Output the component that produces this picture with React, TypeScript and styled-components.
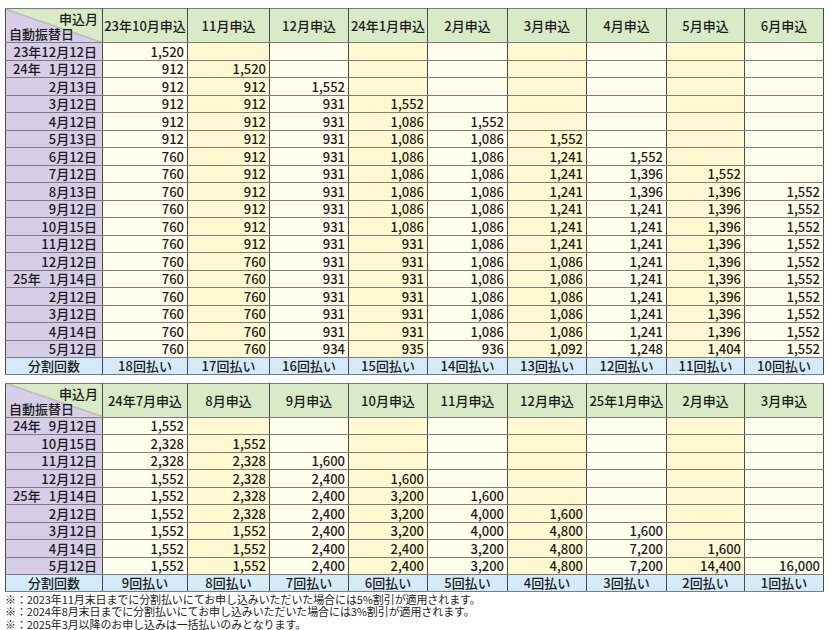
import { createGlobalStyle } from "styled-components";
import styled from "styled-components";

type Row = { date: string; values: number[] };

type Plan = {
  months: string[];
  rows: Row[];
  counts: string[];
};

const GlobalStyle = createGlobalStyle`
  body {
    margin: 0;
    background: #ffffff;
    font-family: "Noto Sans CJK JP", "Noto Sans", sans-serif;
    color: #1c1c1c;
  }
`;

const Page = styled.div`
  padding: 8px 0 0 5px;
  display: flex;
  flex-direction: column;
  gap: 8px;
`;

const Table = styled.table`
  border-collapse: collapse;
  table-layout: fixed;
  width: 818px;
  font-size: 13px;
  font-weight: 500;
  line-height: 1;
  border: 1px solid #4a4a4a;
  td,
  th {
    border-style: solid;
    border-width: 1px;
    border-color: #7c7c7c #4a4a4a;
    padding: 0;
    overflow: hidden;
    white-space: nowrap;
  }
`;

const HeadRow = styled.tr`
  height: 34px;
`;

const BodyRow = styled.tr`
  height: 17.5px;
`;

const CountRow = styled.tr`
  height: 16.5px;
`;

const Corner = styled.th`
  position: relative;
  font-weight: 500;
  background: linear-gradient(
    to top right,
    #d6cde8 calc(50% - 0.6px),
    #8a8a8a 50%,
    #d9ebc6 calc(50% + 0.6px)
  );
`;

const CornerTop = styled.span`
  position: absolute;
  top: 3px;
  right: 4px;
  line-height: 13px;
`;

const CornerBottom = styled.span`
  position: absolute;
  left: 3px;
  bottom: 2px;
  line-height: 13px;
`;

const MonthCell = styled.th`
  background: #d9ebc6;
  font-weight: 500;
  text-align: center;
`;

const DateCell = styled.td`
  background: #d6cde8;
  text-align: right;
  padding-right: 5px !important;
`;

const DateInner = styled.span`
  display: flex;
  justify-content: flex-end;
  gap: 8px;
`;

const NumCell = styled.td<{ $alt: boolean }>`
  background: ${(p) => (p.$alt ? "#fff8d0" : "#fffdec")};
  text-align: right;
  padding-right: 3px !important;
`;

const CountLabel = styled.td`
  background: #d3ebf8;
  text-align: center;
`;

const CountCell = styled.td`
  background: #d3ebf8;
  text-align: center;
`;

const Notes = styled.div`
  margin-top: -7px;
  font-size: 11px;
  line-height: 12.5px;
  letter-spacing: -0.1px;
  color: #222;
`;

const widths = [97, 85, 82, 79, 79, 80, 79, 80, 78, 79];

const plan1: Plan = {
  months: [
    "23年10月申込",
    "11月申込",
    "12月申込",
    "24年1月申込",
    "2月申込",
    "3月申込",
    "4月申込",
    "5月申込",
    "6月申込",
  ],
  rows: [
    { date: "23年12月12日", values: [1520] },
    { date: "24年|1月12日", values: [912, 1520] },
    { date: "2月13日", values: [912, 912, 1552] },
    { date: "3月12日", values: [912, 912, 931, 1552] },
    { date: "4月12日", values: [912, 912, 931, 1086, 1552] },
    { date: "5月13日", values: [912, 912, 931, 1086, 1086, 1552] },
    { date: "6月12日", values: [760, 912, 931, 1086, 1086, 1241, 1552] },
    { date: "7月12日", values: [760, 912, 931, 1086, 1086, 1241, 1396, 1552] },
    { date: "8月13日", values: [760, 912, 931, 1086, 1086, 1241, 1396, 1396, 1552] },
    { date: "9月12日", values: [760, 912, 931, 1086, 1086, 1241, 1241, 1396, 1552] },
    { date: "10月15日", values: [760, 912, 931, 1086, 1086, 1241, 1241, 1396, 1552] },
    { date: "11月12日", values: [760, 912, 931, 931, 1086, 1241, 1241, 1396, 1552] },
    { date: "12月12日", values: [760, 760, 931, 931, 1086, 1086, 1241, 1396, 1552] },
    { date: "25年|1月14日", values: [760, 760, 931, 931, 1086, 1086, 1241, 1396, 1552] },
    { date: "2月12日", values: [760, 760, 931, 931, 1086, 1086, 1241, 1396, 1552] },
    { date: "3月12日", values: [760, 760, 931, 931, 1086, 1086, 1241, 1396, 1552] },
    { date: "4月14日", values: [760, 760, 931, 931, 1086, 1086, 1241, 1396, 1552] },
    { date: "5月12日", values: [760, 760, 934, 935, 936, 1092, 1248, 1404, 1552] },
  ],
  counts: [18, 17, 16, 15, 14, 13, 12, 11, 10].map((n) => `${n}回払い`),
};

const plan2: Plan = {
  months: [
    "24年7月申込",
    "8月申込",
    "9月申込",
    "10月申込",
    "11月申込",
    "12月申込",
    "25年1月申込",
    "2月申込",
    "3月申込",
  ],
  rows: [
    { date: "24年|9月12日", values: [1552] },
    { date: "10月15日", values: [2328, 1552] },
    { date: "11月12日", values: [2328, 2328, 1600] },
    { date: "12月12日", values: [1552, 2328, 2400, 1600] },
    { date: "25年|1月14日", values: [1552, 2328, 2400, 3200, 1600] },
    { date: "2月12日", values: [1552, 2328, 2400, 3200, 4000, 1600] },
    { date: "3月12日", values: [1552, 1552, 2400, 3200, 4000, 4800, 1600] },
    { date: "4月14日", values: [1552, 1552, 2400, 2400, 3200, 4800, 7200, 1600] },
    { date: "5月12日", values: [1552, 1552, 2400, 2400, 3200, 4800, 7200, 14400, 16000] },
  ],
  counts: [9, 8, 7, 6, 5, 4, 3, 2, 1].map((n) => `${n}回払い`),
};

function DateLabel({ date }: { date: string }) {
  if (!date.includes("|")) return <>{date}</>;
  const [year, day] = date.split("|");
  return (
    <DateInner>
      <span>{year}</span>
      <span>{day}</span>
    </DateInner>
  );
}

function PlanTable({ plan }: { plan: Plan }) {
  return (
    <Table>
      <colgroup>
        {widths.map((w, i) => (
          <col key={i} style={{ width: w }} />
        ))}
      </colgroup>
      <thead>
        <HeadRow>
          <Corner>
            <CornerTop>申込月</CornerTop>
            <CornerBottom>自動振替日</CornerBottom>
          </Corner>
          {plan.months.map((m) => (
            <MonthCell key={m}>{m}</MonthCell>
          ))}
        </HeadRow>
      </thead>
      <tbody>
        {plan.rows.map((r, ri) => (
          <BodyRow key={ri}>
            <DateCell>
              <DateLabel date={r.date} />
            </DateCell>
            {plan.months.map((_, ci) => (
              <NumCell key={ci} $alt={ci % 2 === 1}>
                {r.values[ci] !== undefined ? r.values[ci].toLocaleString("en-US") : ""}
              </NumCell>
            ))}
          </BodyRow>
        ))}
        <CountRow>
          <CountLabel>分割回数</CountLabel>
          {plan.counts.map((c) => (
            <CountCell key={c}>{c}</CountCell>
          ))}
        </CountRow>
      </tbody>
    </Table>
  );
}

export default function App() {
  return (
    <>
      <GlobalStyle />
      <Page>
        <PlanTable plan={plan1} />
        <PlanTable plan={plan2} />
        <Notes>
          <div>※：2023年11月末日までに分割払いにてお申し込みいただいた場合には5%割引が適用されます。</div>
          <div>※：2024年8月末日までに分割払いにてお申し込みいただいた場合には3%割引が適用されます。</div>
          <div>※：2025年3月以降のお申し込みは一括払いのみとなります。</div>
        </Notes>
      </Page>
    </>
  );
}
